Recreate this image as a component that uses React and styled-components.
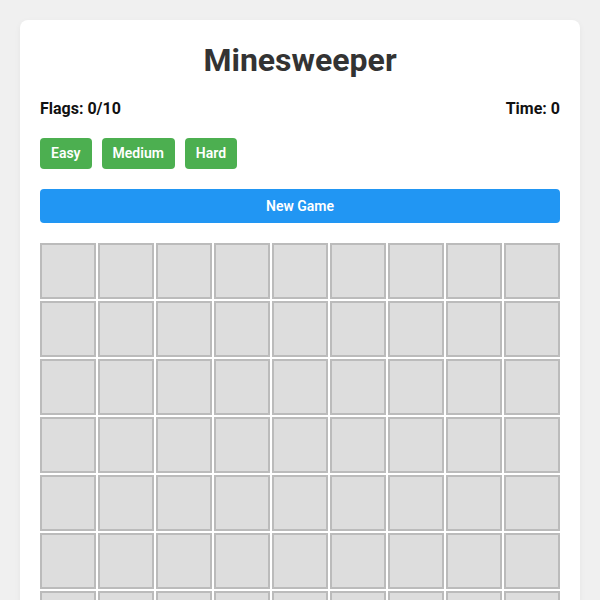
import React, { useState } from 'react';
import styled, { createGlobalStyle } from 'styled-components';

const GlobalStyle = createGlobalStyle`
  body {
    margin: 0;
    background: #f0f0f0;
    font-family: Roboto, "Liberation Sans", Arial, sans-serif;
  }
`;

const Page = styled.div`
  padding: 20px;
`;

const Card = styled.div`
  background: #fff;
  border-radius: 8px;
  padding: 20px;
  box-shadow: 0 2px 6px rgba(0, 0, 0, 0.05);
`;

const Title = styled.h1`
  margin: 0 0 19px;
  text-align: center;
  font-size: 32px;
  line-height: 40px;
  font-weight: 700;
  color: #333;
`;

const InfoRow = styled.div`
  display: flex;
  justify-content: space-between;
  font-size: 16px;
  line-height: 19px;
  font-weight: 700;
  color: #111;
  margin-bottom: 20px;
`;

const Levels = styled.div`
  display: flex;
  gap: 10px;
  margin-bottom: 20px;
`;

const LevelButton = styled.button`
  background: #4caf50;
  color: #fff;
  border: none;
  border-radius: 4px;
  padding: 7px 11px;
  font-family: inherit;
  font-size: 14px;
  line-height: 17px;
  font-weight: 600;
  cursor: pointer;
`;

const NewGame = styled.button`
  display: block;
  width: 100%;
  background: #2196f3;
  color: #fff;
  border: none;
  border-radius: 4px;
  padding: 9px 0;
  font-family: inherit;
  font-size: 14px;
  line-height: 16px;
  font-weight: 600;
  margin-bottom: 20px;
  cursor: pointer;
`;

const Board = styled.div`
  display: grid;
  grid-template-columns: repeat(${p => p.cols}, 1fr);
  gap: 2px;
`;

const Cell = styled.div`
  box-sizing: border-box;
  aspect-ratio: 1;
  background: #ddd;
  border: 2px solid #bbb;
  cursor: pointer;
`;

export default function App() {
  const [size] = useState(9);
  const cells = Array.from({ length: size * size });
  return (
    <Page>
      <GlobalStyle />
      <Card>
        <Title>Minesweeper</Title>
        <InfoRow>
          <span>Flags: 0/10</span>
          <span>Time: 0</span>
        </InfoRow>
        <Levels>
          <LevelButton>Easy</LevelButton>
          <LevelButton>Medium</LevelButton>
          <LevelButton>Hard</LevelButton>
        </Levels>
        <NewGame>New Game</NewGame>
        <Board cols={size}>
          {cells.map((_, i) => <Cell key={i} />)}
        </Board>
      </Card>
    </Page>
  );
}
